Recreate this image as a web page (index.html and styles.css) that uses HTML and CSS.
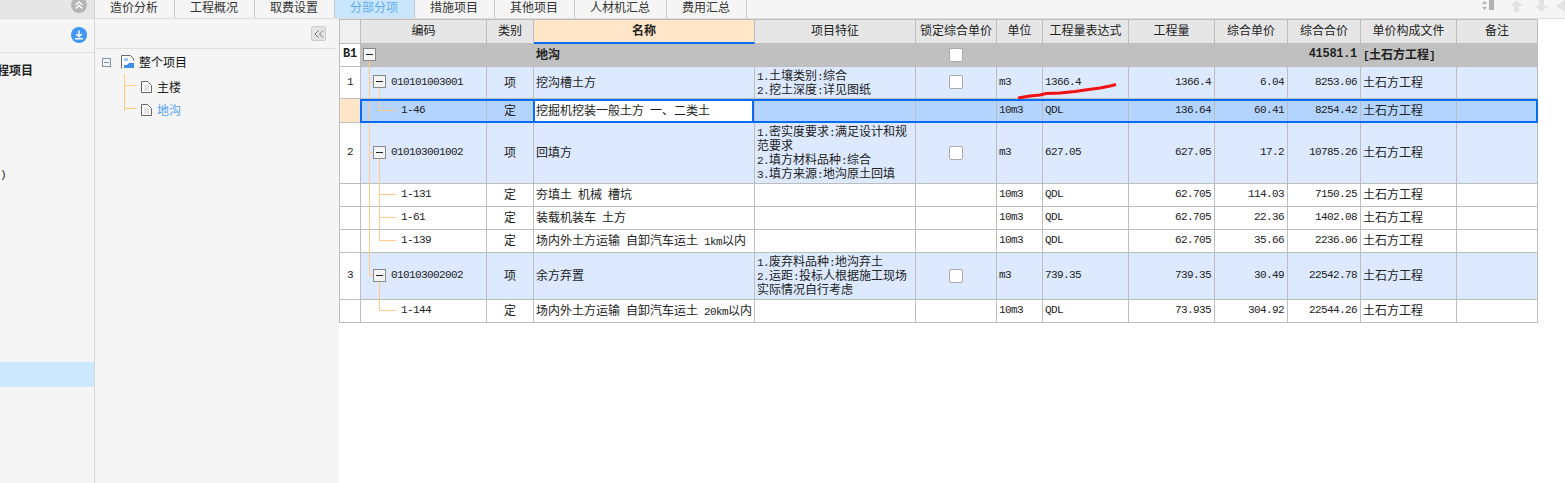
FILE: index.html
```html
<!DOCTYPE html>
<html lang="zh-CN">
<head>
    <meta charset="UTF-8">
    <meta name="viewport" content="width=device-width, initial-scale=1.0">
    <title>分部分项</title>
    <link rel="stylesheet" href="styles.css">
</head>
<body>

<div class="app">
    <aside class="side">
        <div class="side-top">
            <svg class="round" width="16" height="16" viewBox="0 0 16 16"><circle cx="8" cy="8" r="8" fill="#b4b4b4"/><path d="M4.500 8 8 5l3.500 3M4.500 11.500 8 8.500l3.500 3" fill="none" stroke="#fff" stroke-width="1.400"/></svg>
        </div>
        <div class="side-head">
            <svg class="round" width="16" height="16" viewBox="0 0 16 16"><circle cx="8" cy="8" r="8" fill="#3f96f4"/><path d="M8 3.500v6M5.200 7 8 9.800 10.800 7M4 11.800h8" fill="none" stroke="#fff" stroke-width="1.500"/></svg>
        </div>
        <div class="side-list">
            <div class="side-title"><b>工程项目</b></div>
            <div class="side-item m">)</div>
            <div class="side-active"></div>
        </div>
    </aside>

    <div class="main">
        <div class="bar">
            <nav class="tabs">
                <a>造价分析</a>
                <a>工程概况</a>
                <a>取费设置</a>
                <a class="on">分部分项</a>
                <a>措施项目</a>
                <a>其他项目</a>
                <a class="wide">人材机汇总</a>
                <a>费用汇总</a>
            </nav>
            <div class="tools">
                <svg width="14" height="12" viewBox="0 0 14 12"><path d="M0 4l2.500-3L5 4zM0 7h5l-2.500 3z" fill="#b0b0b0"/><rect x="7" y="0" width="5" height="10" fill="#b0b0b0"/></svg>
                <svg class="t1" width="13" height="12" viewBox="0 0 13 12"><path d="M6.500 0 13 6H9v6H4V6H0z" fill="#e2e2e2"/></svg>
                <svg class="t2" width="13" height="12" viewBox="0 0 13 12"><path d="M4 0h5v6h4l-6.500 6L0 6h4z" fill="#e2e2e2"/></svg>
                <svg class="t3" width="9" height="12" viewBox="0 0 9 12"><path d="M0 6 9 0v12z" fill="#e2e2e2"/></svg>
            </div>
        </div>

        <div class="work">
            <div class="tree">
                <div class="tree-top">
                    <span class="fold">
                        <svg width="10" height="8" viewBox="0 0 10 8"><path d="M4.500 0.500 1 4l3.500 3.500M9 0.500 5.500 4 9 7.500" fill="none" stroke="#777" stroke-width="1"/></svg>
                    </span>
                </div>
                <div class="tree-root">
                    <span class="tree-exp"></span>
                    <svg class="tree-ico" width="14" height="14" viewBox="0 0 14 14"><path d="M.5 13.500V.5h9l3 3v2" fill="#fff" stroke="#667"/><rect x="3" y="3" width="4" height="3" fill="#9cc7f5"/><path d="M3 13v-3h3l2-2h5v5z" fill="#3f8fe6"/></svg>
                    <span>整个项目</span>
                </div>
                <ul class="tree-kids">
                    <li>
                        <svg width="11" height="12" viewBox="0 0 11 12"><path d="M.5.500h6l4 4v7H.5z" fill="#fff" stroke="#666"/><path d="M3 5h5M3 7h5M3 9h5" stroke="#ccc"/></svg>
                        <span>主楼</span>
                    </li>
                    <li class="cur">
                        <svg width="11" height="12" viewBox="0 0 11 12"><path d="M.5.500h6l4 4v7H.5z" fill="#fff" stroke="#666"/><path d="M3 5h5M3 7h5M3 9h5" stroke="#ccc"/></svg>
                        <span>地沟</span>
                    </li>
                </ul>
            </div>

            <div class="grid">
                <table class="sheet">
                    <colgroup>
                        <col class="c-no"><col class="c-code"><col class="c-type"><col class="c-name"><col class="c-desc"><col class="c-lock"><col class="c-unit"><col class="c-expr"><col class="c-qty"><col class="c-price"><col class="c-total"><col class="c-file"><col class="c-note">
                    </colgroup>
                    <thead>
                        <tr>
                            <th class="blank"></th>
                            <th>编码</th>
                            <th>类别</th>
                            <th class="sorted">名称</th>
                            <th>项目特征</th>
                            <th>锁定综合单价</th>
                            <th>单位</th>
                            <th>工程量表达式</th>
                            <th>工程量</th>
                            <th>综合单价</th>
                            <th>综合合价</th>
                            <th>单价构成文件</th>
                            <th>备注</th>
                        </tr>
                    </thead>
                    <tbody>
                        <tr class="group">
                            <td class="no m bold-num">B1</td>
                            <td><div class="code lv0"><span class="exp"></span></div></td>
                            <td></td>
                            <td class="txt">地沟</td>
                            <td></td>
                            <td class="mid"><span class="chk"></span></td>
                            <td></td><td></td><td></td><td></td>
                            <td class="num m bold-num">41581.1</td>
                            <td class="txt"><i class="m">[</i>土石方工程<i class="m">]</i></td>
                            <td></td>
                        </tr>
                        <tr class="item r32">
                            <td class="no m">1</td>
                            <td><div class="code lv1"><span class="exp"></span><span class="m">010101003001</span></div></td>
                            <td class="mid">项</td>
                            <td class="txt">挖沟槽土方</td>
                            <td class="txt"><i class="m">1.</i>土壤类别<i class="m">:</i>综合<br><i class="m">2.</i>挖土深度<i class="m">:</i>详见图纸</td>
                            <td class="mid"><span class="chk"></span></td>
                            <td class="txt m">m3</td>
                            <td class="txt m">1366.4</td>
                            <td class="num m">1366.4</td>
                            <td class="num m">6.04</td>
                            <td class="num m">8253.06</td>
                            <td class="txt">土石方工程</td>
                            <td></td>
                        </tr>
                        <tr class="picked r24">
                            <td class="no"></td>
                            <td><div class="code lv2 m">1-46</div></td>
                            <td class="mid">定</td>
                            <td class="txt editing">挖掘机挖装一般土方&ensp;一、二类土</td>
                            <td></td>
                            <td></td>
                            <td class="txt m">10m3</td>
                            <td class="txt m">QDL</td>
                            <td class="num m">136.64</td>
                            <td class="num m">60.41</td>
                            <td class="num m">8254.42</td>
                            <td class="txt">土石方工程</td>
                            <td></td>
                        </tr>
                        <tr class="item r61">
                            <td class="no m">2</td>
                            <td><div class="code lv1"><span class="exp"></span><span class="m">010103001002</span></div></td>
                            <td class="mid">项</td>
                            <td class="txt">回填方</td>
                            <td class="txt"><i class="m">1.</i>密实度要求<i class="m">:</i>满足设计和规范要求<br><i class="m">2.</i>填方材料品种<i class="m">:</i>综合<br><i class="m">3.</i>填方来源<i class="m">:</i>地沟原土回填</td>
                            <td class="mid"><span class="chk"></span></td>
                            <td class="txt m">m3</td>
                            <td class="txt m">627.05</td>
                            <td class="num m">627.05</td>
                            <td class="num m">17.2</td>
                            <td class="num m">10785.26</td>
                            <td class="txt">土石方工程</td>
                            <td></td>
                        </tr>
                        <tr>
                            <td class="no"></td>
                            <td><div class="code lv2 m">1-131</div></td>
                            <td class="mid">定</td>
                            <td class="txt">夯填土&ensp;机械&ensp;槽坑</td>
                            <td></td>
                            <td></td>
                            <td class="txt m">10m3</td>
                            <td class="txt m">QDL</td>
                            <td class="num m">62.705</td>
                            <td class="num m">114.03</td>
                            <td class="num m">7150.25</td>
                            <td class="txt">土石方工程</td>
                            <td></td>
                        </tr>
                        <tr>
                            <td class="no"></td>
                            <td><div class="code lv2 m">1-61</div></td>
                            <td class="mid">定</td>
                            <td class="txt">装载机装车&ensp;土方</td>
                            <td></td>
                            <td></td>
                            <td class="txt m">10m3</td>
                            <td class="txt m">QDL</td>
                            <td class="num m">62.705</td>
                            <td class="num m">22.36</td>
                            <td class="num m">1402.08</td>
                            <td class="txt">土石方工程</td>
                            <td></td>
                        </tr>
                        <tr>
                            <td class="no"></td>
                            <td><div class="code lv2 m">1-139</div></td>
                            <td class="mid">定</td>
                            <td class="txt">场内外土方运输&ensp;自卸汽车运土&ensp;<i class="m">1km</i>以内</td>
                            <td></td>
                            <td></td>
                            <td class="txt m">10m3</td>
                            <td class="txt m">QDL</td>
                            <td class="num m">62.705</td>
                            <td class="num m">35.66</td>
                            <td class="num m">2236.06</td>
                            <td class="txt">土石方工程</td>
                            <td></td>
                        </tr>
                        <tr class="item r47">
                            <td class="no m">3</td>
                            <td><div class="code lv1"><span class="exp"></span><span class="m">010103002002</span></div></td>
                            <td class="mid">项</td>
                            <td class="txt">余方弃置</td>
                            <td class="txt"><i class="m">1.</i>废弃料品种<i class="m">:</i>地沟弃土<br><i class="m">2.</i>运距<i class="m">:</i>投标人根据施工现场实际情况自行考虑</td>
                            <td class="mid"><span class="chk"></span></td>
                            <td class="txt m">m3</td>
                            <td class="txt m">739.35</td>
                            <td class="num m">739.35</td>
                            <td class="num m">30.49</td>
                            <td class="num m">22542.78</td>
                            <td class="txt">土石方工程</td>
                            <td></td>
                        </tr>
                        <tr>
                            <td class="no"></td>
                            <td><div class="code lv2 m">1-144</div></td>
                            <td class="mid">定</td>
                            <td class="txt nowrap">场内外土方运输&ensp;自卸汽车运土&ensp;<i class="m">20km</i>以内</td>
                            <td></td>
                            <td></td>
                            <td class="txt m">10m3</td>
                            <td class="txt m">QDL</td>
                            <td class="num m">73.935</td>
                            <td class="num m">304.92</td>
                            <td class="num m">22544.26</td>
                            <td class="txt">土石方工程</td>
                            <td></td>
                        </tr>
                    </tbody>
                </table>

                <!-- connectors and the pen mark sit on top of the table, page coordinates -->
                <svg class="overlay" width="1226" height="464" viewBox="339 19 1226 464">
                    <g stroke="#ffcc88" fill="none" shape-rendering="crispEdges">
                        <path d="M369.500 62v214M369 82.500h4M369 152.500h4M369 275.500h4"/>
                        <path d="M379.500 89v22M379 110.500h17"/>
                        <path d="M379.500 159v82M379 194.500h17M379 217.500h17M379 240.500h17"/>
                        <path d="M379.500 282v29M379 310.500h17"/>
                    </g>
                    <path d="M1018 98l12-2 10-1 6-1.500 14-.5 15-1.500 10-1.500 15-2 10-2 6-1.500" fill="none" stroke="#f01010" stroke-width="3"/>
                </svg>
                <div class="frame"></div>
            </div>
        </div>
    </div>
</div>

</body>
</html>
```

FILE: styles.css
```css
* {
    box-sizing: border-box;
}
html, body {
    margin: 0;
    height: 483px;
    overflow: hidden;
    background-color: #fff;
}
body {
    font-family: "Noto Sans CJK SC", sans-serif;
    font-size: 12px;
    line-height: 14px;
    color: #222;
}
i {
    font-style: normal;
}
.m {
    font-family: "Liberation Mono", "Noto Sans CJK SC", monospace;
    font-size: 11px;
    letter-spacing: -0.6px;
}
i.m {
    line-height: 0;
}
.bold-num {
    font-size: 12px;
    letter-spacing: -0.3px;
}

.app {
    display: flex;
    height: 483px;
}

/* left column */
.side {
    width: 95px;
    flex: none;
    background-color: #f5f5f5;
    border-right: 1px solid #d6d6d6;
    overflow: hidden;
}
.side-top {
    height: 19px;
    background-color: #e6e6e6;
    border-bottom: 1px solid #ddd;
    padding-right: 7px;
    display: flex;
    justify-content: flex-end;
    overflow: hidden;
}
.side-top .round {
    margin-top: -3px;
}
.side-head {
    height: 34px;
    border-bottom: 1px solid #ddd;
    padding: 8px 7px 0 0;
    display: flex;
    justify-content: flex-end;
}
.side-list {
    display: flex;
    flex-direction: column;
}
.side-title {
    margin: 10px 0 0 -15px;
    white-space: nowrap;
}
.side-item {
    margin-top: 91px;
}
.side-active {
    margin-top: 180px;
    height: 25px;
    background-color: #cce8ff;
}

.main {
    flex: 1;
    display: flex;
    flex-direction: column;
    min-width: 0;
}

/* tabs */
.bar {
    height: 19px;
    flex: none;
    display: flex;
    justify-content: space-between;
    background-color: #f5f5f5;
    border-bottom: 1px solid #ddd;
    overflow: hidden;
}
.tabs {
    display: flex;
}
.tabs a {
    width: 80px;
    padding-right: 1px;
    text-align: center;
    color: #333;
    border-right: 1px solid #c8c8c8;
}
.tabs a.wide {
    width: 92px;
}
.tabs a.on {
    background-color: #c9e6ff;
    color: #62abee;
}
.tools {
    display: flex;
    align-items: flex-start;
}
.tools .t1 {
    margin-left: 14px;
}
.tools .t2 {
    margin-left: 12px;
}
.tools .t3 {
    margin-left: 8px;
}

.work {
    flex: 1;
    display: flex;
    min-height: 0;
}

/* project tree */
.tree {
    width: 244px;
    flex: none;
    background-color: #f5f5f5;
    padding: 0 3px 0 2px;
}
.tree-top {
    height: 30px;
    border-bottom: 1px solid #ddd;
    display: flex;
    justify-content: flex-end;
    padding: 7px 10px 0 0;
}
.fold {
    width: 15px;
    height: 15px;
    display: flex;
    align-items: center;
    justify-content: center;
    background-color: #e4e4e4;
    border: 1px solid #ccc;
    border-radius: 2px;
}
.tree-root {
    display: flex;
    align-items: center;
    height: 14px;
    margin-top: 6px;
    padding-left: 5px;
    color: #111;
}
.tree-exp {
    width: 9px;
    height: 9px;
    border: 1px solid #7c93a8;
    position: relative;
    margin-right: 10px;
}
.tree-exp::before {
    content: "";
    position: absolute;
    left: 1px;
    right: 1px;
    top: 3px;
    height: 1px;
    background-color: #7c93a8;
}
.tree-ico {
    margin-right: 4px;
}
.tree-kids {
    list-style: none;
    margin: 5px 0 0 27px;
    padding: 1px 0 0 16px;
    border-left: 1px solid #ffcc88;
    height: 37px;
}
.tree-kids li {
    display: flex;
    align-items: center;
    height: 23px;
    position: relative;
}
.tree-kids li::before {
    content: "";
    position: absolute;
    left: -16px;
    width: 12px;
    top: 10px;
    height: 1px;
    background-color: #ffcc88;
}
.tree-kids svg {
    margin-right: 5px;
}
.tree-kids .cur {
    color: #4da0f0;
}

/* main sheet */
.grid {
    flex: 1;
    position: relative;
    min-width: 0;
    overflow: hidden;
}
.sheet {
    width: 1199px;
    table-layout: fixed;
    border-collapse: separate;
    border-spacing: 0;
    border-left: 1px solid #bdbdbd;
    border-top: 1px solid #bdbdbd;
}
.c-no { width: 21px; }
.c-code { width: 126px; }
.c-type { width: 47px; }
.c-name { width: 221px; }
.c-desc { width: 161px; }
.c-lock { width: 81px; }
.c-unit { width: 46px; }
.c-expr { width: 86px; }
.c-qty { width: 86px; }
.c-price { width: 73px; }
.c-total { width: 73px; }
.c-file { width: 96px; }
.c-note { width: 81px; }

.sheet th, .sheet td {
    border-right: 1px solid #bdbdbd;
    border-bottom: 1px solid #bdbdbd;
    padding: 0 0 2px 2px;
    height: 23px;
    font-weight: normal;
    overflow: hidden;
    vertical-align: middle;
}
.sheet th {
    height: 24px;
    background-color: #e6e6e6;
    text-align: center;
    white-space: nowrap;
    padding: 0 0 3px;
}
.sheet th.blank {
    background-color: #f0f0f0;
}
.sheet th.sorted {
    background-color: #ffe6c8;
    font-weight: bold;
    border-bottom: 2px solid #0a6cf5;
}

.sheet .no, .sheet .mid {
    text-align: center;
    padding-left: 0;
}
.sheet .no {
    background-color: #fff;
}
.sheet .num {
    text-align: right;
    padding-right: 3px;
    white-space: nowrap;
}
.sheet .txt {
    word-break: break-all;
}
.sheet .nowrap {
    white-space: nowrap;
}

.group td {
    background-color: #c0c0c0;
    font-weight: bold;
}
.item td {
    background-color: #dce9ff;
}
.picked td {
    background-color: #b3d4ff;
}
.sheet .picked .no {
    background-color: #ffe6c8;
}
.sheet .picked .editing {
    background-color: #fff;
    box-shadow: inset -2px 0 #0a6cf5, -1px 0 #0a6cf5, inset 1px 0 #0a6cf5;
}
.sheet .r24 td { height: 24px; }
.sheet .r32 td { height: 32px; }
.sheet .r47 td { height: 47px; }
.sheet .r61 td { height: 61px; }

.code {
    display: flex;
    align-items: center;
    white-space: nowrap;
}
.lv0 {
    padding-left: 0;
}
.lv1 {
    padding-left: 10px;
}
.lv2 {
    padding-left: 38px;
}
.exp {
    width: 13px;
    height: 13px;
    flex: none;
    margin-right: 5px;
    background-color: #f4f4f4;
    border: 1px solid #888;
    position: relative;
}
.exp::before {
    content: "";
    position: absolute;
    left: 2px;
    right: 2px;
    top: 5px;
    height: 1px;
    background-color: #222;
}
.chk {
    display: inline-block;
    width: 14px;
    height: 14px;
    vertical-align: middle;
    background-color: #fff;
    border: 1px solid #aaa;
    border-radius: 2px;
}

.overlay {
    position: absolute;
    left: 0;
    top: 0;
    pointer-events: none;
}
.frame {
    position: absolute;
    left: 21px;
    top: 80px;
    width: 1178px;
    height: 24px;
    border: 2px solid #0a6cf5;
    pointer-events: none;
}
```
